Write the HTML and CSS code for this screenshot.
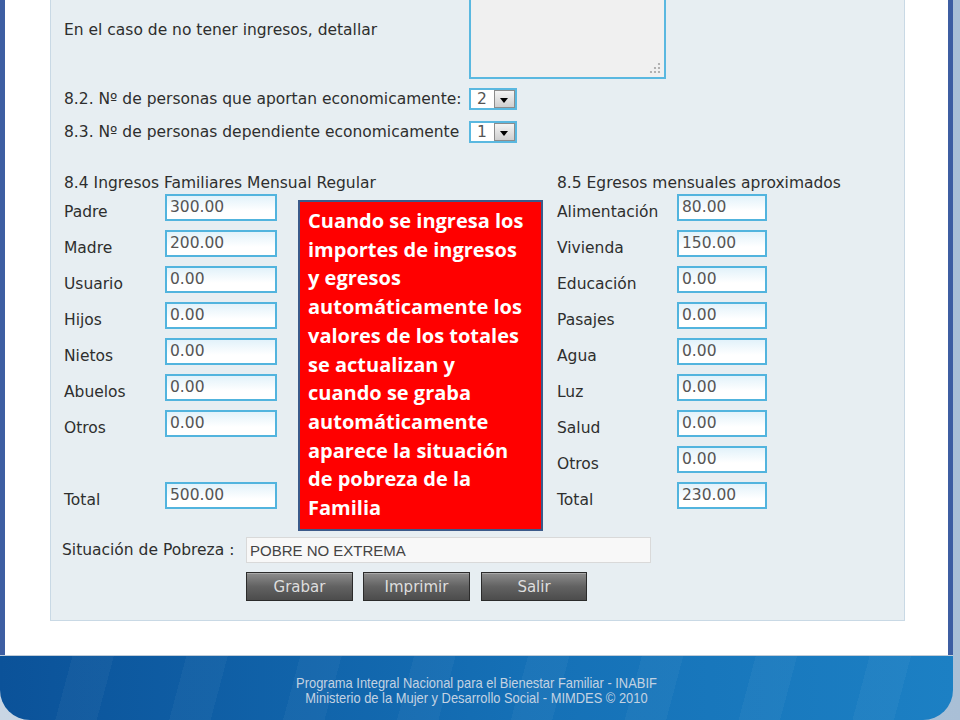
FILE: index.html
```html
<!DOCTYPE html>
<html lang="es">
<head>
    <meta charset="UTF-8">
    <title>Situación Económica - INABIF</title>
    <link rel="stylesheet" href="styles.css">
</head>
<body>
    <div class="frame">
        <div class="content">
            <div class="panel">
                <div class="field field-detail">
                    <span class="lbl">En el caso de no tener ingresos, detallar</span>
                    <div class="memo">
                        <svg class="grip" width="14" height="14" viewBox="0 0 14 14">
                            <circle cx="11" cy="3" r="1.1"/>
                            <circle cx="7" cy="7" r="1.1"/>
                            <circle cx="11" cy="7" r="1.1"/>
                            <circle cx="3" cy="11" r="1.1"/>
                            <circle cx="7" cy="11" r="1.1"/>
                            <circle cx="11" cy="11" r="1.1"/>
                        </svg>
                    </div>
                </div>

                <div class="field field-count first">
                    <span class="lbl">8.2. Nº de personas que aportan economicamente:</span>
                    <div class="combo"><span class="combo-value">2</span><span class="combo-btn"></span></div>
                </div>
                <div class="field field-count">
                    <span class="lbl">8.3. Nº de personas dependiente economicamente</span>
                    <div class="combo"><span class="combo-value">1</span><span class="combo-btn"></span></div>
                </div>

                <div class="columns">
                    <div class="col col-in">
                        <div class="col-title">8.4 Ingresos Familiares Mensual Regular</div>
                        <div class="rows">
                            <div class="row"><span class="lbl">Padre</span><input class="amount" value="300.00"></div>
                            <div class="row"><span class="lbl">Madre</span><input class="amount" value="200.00"></div>
                            <div class="row"><span class="lbl">Usuario</span><input class="amount" value="0.00"></div>
                            <div class="row"><span class="lbl">Hijos</span><input class="amount" value="0.00"></div>
                            <div class="row"><span class="lbl">Nietos</span><input class="amount" value="0.00"></div>
                            <div class="row"><span class="lbl">Abuelos</span><input class="amount" value="0.00"></div>
                            <div class="row"><span class="lbl">Otros</span><input class="amount" value="0.00"></div>
                            <div class="row"></div>
                            <div class="row"><span class="lbl">Total</span><input class="amount" value="500.00"></div>
                        </div>
                    </div>
                    <div class="col col-out">
                        <div class="col-title">8.5 Egresos mensuales aproximados</div>
                        <div class="rows">
                            <div class="row"><span class="lbl">Alimentación</span><input class="amount" value="80.00"></div>
                            <div class="row"><span class="lbl">Vivienda</span><input class="amount" value="150.00"></div>
                            <div class="row"><span class="lbl">Educación</span><input class="amount" value="0.00"></div>
                            <div class="row"><span class="lbl">Pasajes</span><input class="amount" value="0.00"></div>
                            <div class="row"><span class="lbl">Agua</span><input class="amount" value="0.00"></div>
                            <div class="row"><span class="lbl">Luz</span><input class="amount" value="0.00"></div>
                            <div class="row"><span class="lbl">Salud</span><input class="amount" value="0.00"></div>
                            <div class="row"><span class="lbl">Otros</span><input class="amount" value="0.00"></div>
                            <div class="row"><span class="lbl">Total</span><input class="amount" value="230.00"></div>
                        </div>
                    </div>
                </div>

                <div class="status-row">
                    <span class="lbl">Situación de Pobreza :</span>
                    <input class="status-value" value="POBRE NO EXTREMA" readonly>
                </div>

                <div class="actions">
                    <button class="btn btn-save">Grabar</button>
                    <button class="btn btn-print">Imprimir</button>
                    <button class="btn btn-exit">Salir</button>
                </div>
            </div>
        </div>

        <div class="footer">
            <p>Programa Integral Nacional para el Bienestar Familiar - INABIF</p>
            <p>Ministerio de la Mujer y Desarrollo Social - MIMDES © 2010</p>
        </div>

        <!-- nota de la diapositiva sobre el formulario -->
        <div class="callout">
            Cuando se ingresa los<br>
            importes de ingresos<br>
            y egresos<br>
            automáticamente los<br>
            valores de los totales<br>
            se actualizan y<br>
            cuando se graba<br>
            automáticamente<br>
            aparece la situación<br>
            de pobreza de la<br>
            Familia
        </div>
    </div>
</body>
</html>
```

FILE: styles.css
```css
body {
    margin: 0;
    height: 720px;
    overflow: hidden;
    background: linear-gradient(90deg, #c9d6e4, #a9bfd6);
    font-family: "DejaVu Sans", Verdana, sans-serif;
    font-size: 15.5px;
    color: #2e2e2e;
}
.frame {
    position: relative;
    width: 953px;
}
.content {
    height: 655px;
    box-sizing: border-box;
    background: #fff;
    border-left: 5px solid #3d5ea2;
    border-right: 5px solid #3d5ea2;
    padding-left: 45px;
    overflow: hidden;
}
.panel {
    width: 855px;
    box-sizing: border-box;
    margin-top: -20px;
    padding: 0 13px 19px;
    background: #e7eef2;
    border: 1px solid #c9d9e5;
    border-top: none;
}
.lbl {
    line-height: 18px;
    white-space: nowrap;
}
.field {
    display: grid;
    grid-template-columns: 405px auto;
}
.field-detail .lbl {
    padding-top: 41px;
}
.memo {
    position: relative;
    width: 197px;
    height: 99px;
    box-sizing: border-box;
    border: 2px solid #5ab8e0;
    background: #f0f0f0;
}
.grip {
    position: absolute;
    right: 2px;
    bottom: 2px;
    fill: #a3a3a3;
}
.field-count {
    align-items: center;
    margin-top: 11px;
}
.field-count.first {
    margin-top: 9px;
}
.combo {
    display: flex;
    justify-content: space-between;
    width: 48px;
    height: 22px;
    box-sizing: border-box;
    border: 2px solid #5ab8e0;
    background: #fff;
}
.combo-value {
    padding-left: 6px;
    line-height: 18px;
    color: #555;
}
.combo-btn {
    position: relative;
    width: 21px;
    height: 18px;
    box-sizing: border-box;
    border: 1px solid #8c8c8c;
    background: linear-gradient(#f4f4f4, #cfcfcf);
}
.combo-btn::after {
    content: "";
    position: absolute;
    left: 5px;
    top: 7px;
    border-left: 4.5px solid transparent;
    border-right: 4.5px solid transparent;
    border-top: 5px solid #000;
}
.columns {
    display: grid;
    grid-template-columns: 493px auto;
    margin-top: 30px;
}
.col-title {
    line-height: 18px;
    padding-top: 1px;
    margin-bottom: 2px;
}
.rows {
    display: flex;
    flex-direction: column;
    gap: 9px;
}
.row {
    display: grid;
    height: 27px;
    align-items: start;
}
.col-in .row {
    grid-template-columns: 101px 112px;
}
.col-out .row {
    grid-template-columns: 120px 90px;
}
.row .lbl {
    padding-top: 9px;
}
.amount {
    width: 100%;
    height: 27px;
    box-sizing: border-box;
    margin: 0;
    padding: 2px 3px 3px;
    border: 2px solid #52b4de;
    background: linear-gradient(#e2f2fa, #fff 65%);
    font: inherit;
    line-height: 18px;
    color: #555;
    outline: none;
}
.status-row {
    display: grid;
    grid-template-columns: 184px 405px;
    align-items: center;
    margin: 28px 0 0 -2px;
}
.status-value {
    height: 26px;
    box-sizing: border-box;
    margin: 0;
    padding: 0 3px;
    border: 1px solid #d9d9d9;
    background: #f8f8f8;
    font-family: "Liberation Sans", Arial, sans-serif;
    font-size: 15px;
    color: #444;
    outline: none;
}
.actions {
    display: flex;
    gap: 10px;
    margin: 9px 0 0 182px;
}
.btn {
    width: 107px;
    height: 29px;
    margin: 0;
    padding: 0;
    border: 1px solid #2b2b2b;
    background: linear-gradient(#8d8d8d, #626262 50%, #4c4c4c);
    box-shadow: inset 0 1px 0 #a8a8a8;
    font-family: "DejaVu Sans", Verdana, sans-serif;
    font-size: 15px;
    color: #dedede;
}
.btn-exit {
    width: 106px;
    margin-left: 1px;
}
.footer {
    height: 65px;
    box-sizing: border-box;
    padding-top: 20px;
    border-top: 1px solid #c0ccd8;
    border-radius: 0 0 30px 30px;
    background:
        repeating-linear-gradient(105deg, rgba(255,255,255,0) 0 70px, rgba(255,255,255,0.035) 70px 110px),
        linear-gradient(90deg, #0b5299, #1570b6 55%, #1c80c4);
    text-align: center;
    font-family: "Liberation Sans", Arial, sans-serif;
    font-size: 14.5px;
    color: #c3d2e2;
}
.footer p {
    margin: 0;
    line-height: 15px;
    transform: scaleX(0.89);
}
.callout {
    position: absolute;
    left: 298px;
    top: 200px;
    width: 245px;
    height: 331px;
    box-sizing: border-box;
    padding: 5px 0 0 8px;
    border: 2px solid #3b5a8a;
    background: #ff0000;
    font-family: "Open Sans", Lato, sans-serif;
    font-weight: bold;
    font-size: 20px;
    line-height: 28.7px;
    white-space: nowrap;
    color: #fff;
}
```
